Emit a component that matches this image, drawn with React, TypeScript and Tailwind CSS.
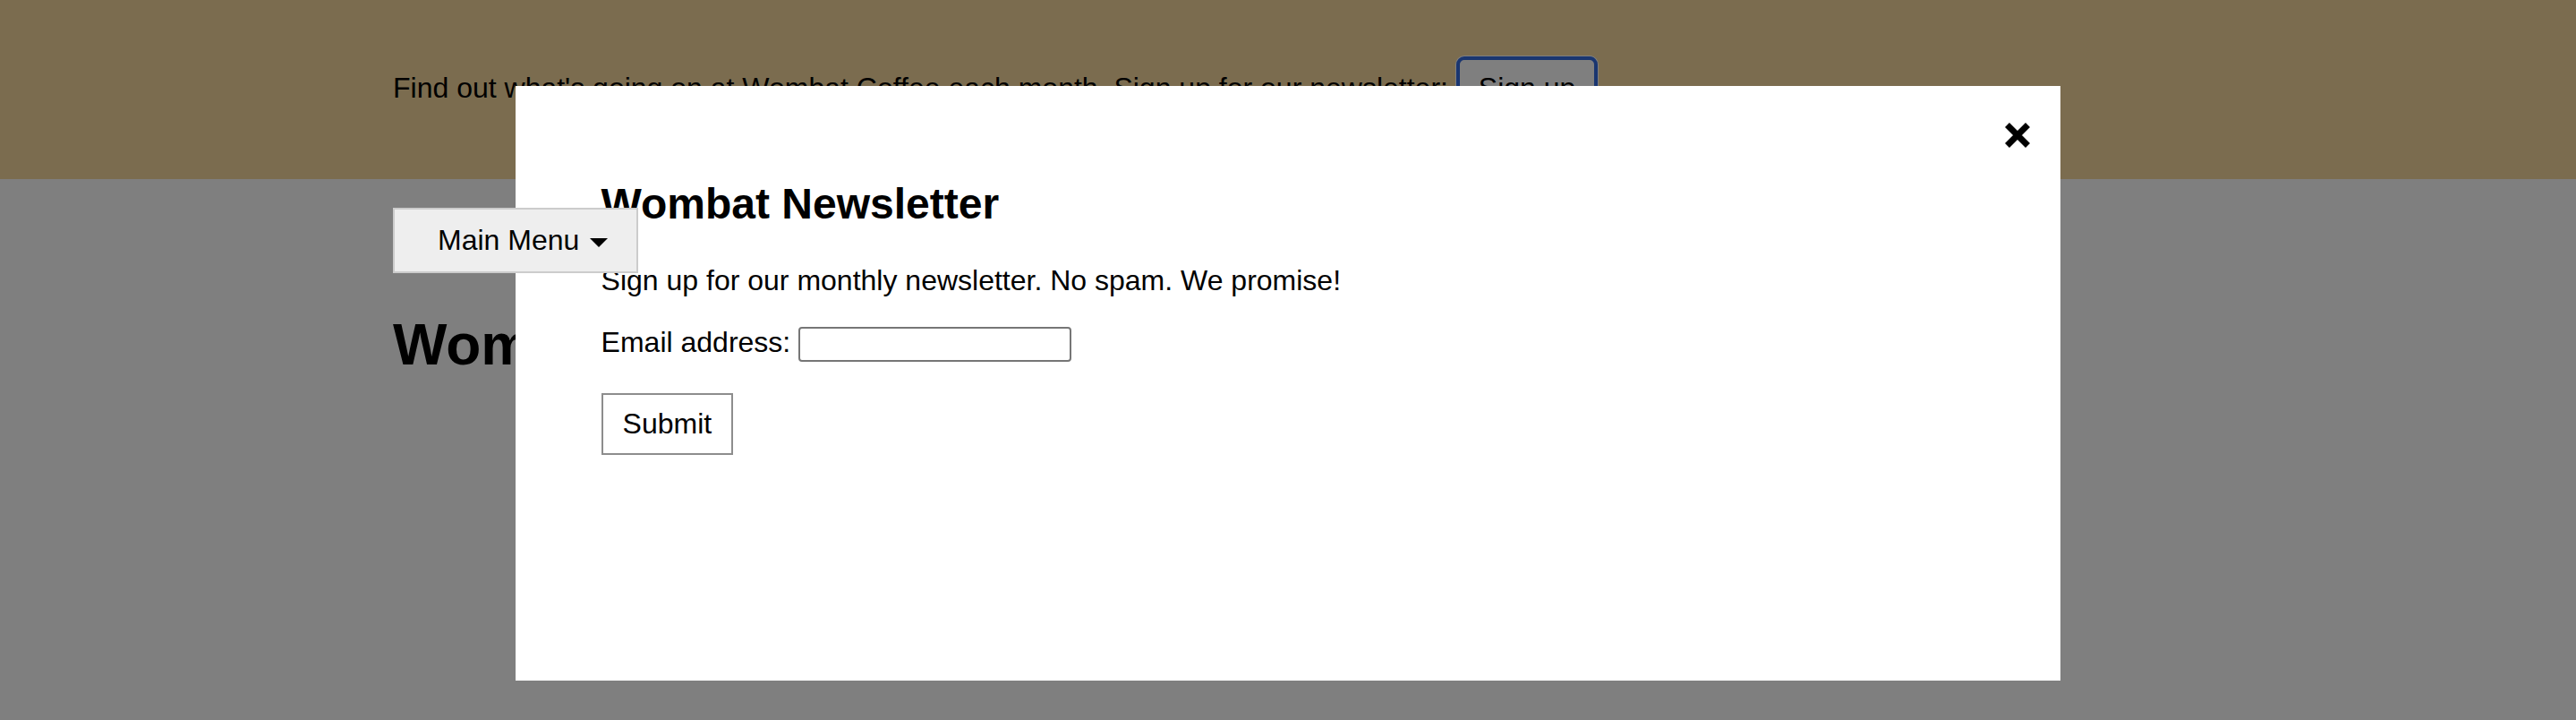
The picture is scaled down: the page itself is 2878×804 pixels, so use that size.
import React from "react";

const CloseIcon = () => (
  <svg width="28" height="28" viewBox="0 0 28 28" fill="none">
    <path d="M2.5 2.5 L25.5 25.5 M25.5 2.5 L2.5 25.5" stroke="#000" strokeWidth="7" strokeLinecap="butt" />
  </svg>
);

export default function App() {
  return (
    <div className="relative min-h-[804px] bg-white font-['Liberation_Sans',Arial,Helvetica,sans-serif] text-[32px] leading-[37px] text-black">
      <header className="h-[200px] bg-[#f6d89e] pt-[63px]">
        <div className="mx-auto w-[2000px]">
          <p>
            Find out what's going on at Wombat Coffee each month. Sign up for our newsletter:{" "}
            <button className="inline-block rounded-[9px] border-4 border-[#356ce0] bg-white px-[21px] py-[13px] ring-1 ring-white">
              Sign up
            </button>
          </p>
        </div>
      </header>

      <main className="mx-auto w-[2000px]">
        <div className="mt-[32px] flex">
          <button className="relative z-30 border-2 border-[#cccccc] bg-[#eeeeee] py-[16px] pl-[48px] pr-[64px] text-left">
            Main Menu
            <span className="absolute right-[32px] top-[32px] h-0 w-0 border-x-[10px] border-t-[10px] border-x-transparent border-t-black" />
          </button>
        </div>
        <h1 className="mt-[43px] text-[64px] font-bold leading-[74px]">Wombat Coffee Roasters</h1>
      </main>

      {/* backdrop + dialog */}
      <div className="fixed inset-0 z-10 bg-[rgba(0,0,0,0.5)]" />
      <div className="fixed bottom-[44px] left-[20%] right-[20%] top-[96px] z-20 bg-white px-[96px] pt-[64px]">
        <button className="absolute right-[34px] top-[41px] flex h-[28px] w-[28px] items-center justify-center">
          <CloseIcon />
        </button>
        <h2 className="mt-[40px] text-[48px] font-bold leading-[55px]">Wombat Newsletter</h2>
        <p className="mt-[40px]">Sign up for our monthly newsletter. No spam. We promise!</p>
        <form className="flex flex-col items-start">
          <label className="mt-[32px] flex items-start gap-[9px]">
            <span>Email address:</span>
            <input
              type="email"
              className="mt-[1px] h-[39px] w-[305px] rounded-[4px] border-2 border-[#767676] bg-white px-[4px] text-[26px]"
            />
          </label>
          <button type="button" className="mt-[35px] border-2 border-[#8d8d8d] bg-white px-[22px] py-[14px]">
            Submit
          </button>
        </form>
      </div>
    </div>
  );
}
